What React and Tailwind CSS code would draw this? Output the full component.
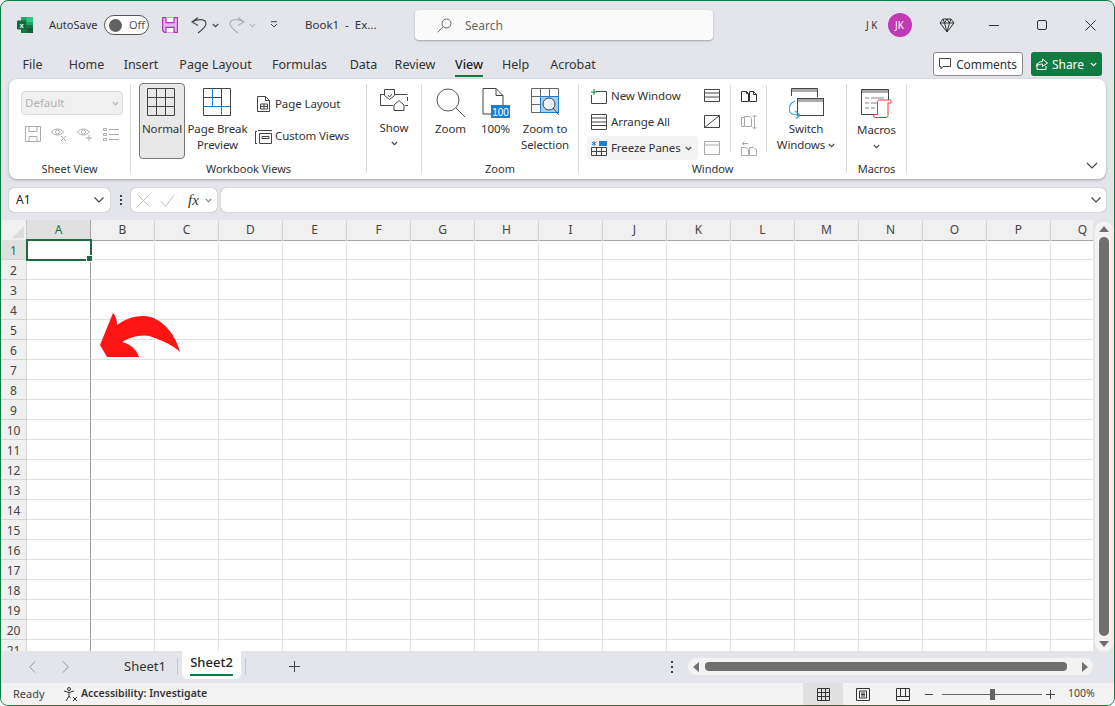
import React from "react";

const columns = ["A", "B", "C", "D", "E", "F", "G", "H", "I", "J", "K", "L", "M", "N", "O", "P", "Q"];
const rows = Array.from({ length: 21 }, (_, i) => i + 1);

const tabs = [
  { name: "File", w: "w-[41px]" },
  { name: "Home", w: "w-[67px]" },
  { name: "Insert", w: "w-[42px]" },
  { name: "Page Layout", w: "w-[107px]" },
  { name: "Formulas", w: "w-[61px]" },
  { name: "Data", w: "w-[67px]" },
  { name: "Review", w: "w-[36px]" },
  { name: "View", w: "w-[72px]", active: true },
  { name: "Help", w: "w-[21px]" },
  { name: "Acrobat", w: "w-[94px]" },
];

function Chevron({ color = "#444", className = "" }) {
  return (
    <svg width="7" height="5" viewBox="0 0 7 5" className={`shrink-0 ${className}`} fill="none" stroke={color} strokeWidth="1.1">
      <path d="M.8 1l2.700 2.700L6.200 1" />
    </svg>
  );
}

function Glyph({ w = 16, h = 16, color = "#444", sw = 1, children, className = "" }) {
  return (
    <svg width={w} height={h} viewBox={`0 0 ${w} ${h}`} className={`shrink-0 ${className}`} fill="none" stroke={color} strokeWidth={sw}>
      {children}
    </svg>
  );
}

function Group({ label, width, children }) {
  return (
    <div className={`${width} h-[89px] mt-[5px] border-r border-[#d9d9d9] flex flex-col shrink-0`}>
      <div className="h-[77px] flex shrink-0">{children}</div>
      <div className="h-[16px] leading-[16px] text-[11px] text-center text-[#333] shrink-0">{label}</div>
    </div>
  );
}

function BigBtn({ width, icon, lines }) {
  return (
    <div className={`${width} flex flex-col items-center shrink-0`}>
      <div className="h-[37px] pt-[4px]">{icon}</div>
      {lines.map((l) => (
        <div key={l} className="leading-[16px] text-[11.5px] tracking-[-0.1px] text-[#333] whitespace-nowrap">
          {l}
        </div>
      ))}
    </div>
  );
}

function SmallRow({ icon, label, chevron, active }) {
  return (
    <div className={`h-[24px] w-[111px] pl-[4px] flex items-center gap-[4px] rounded-[4px] text-[11.5px] tracking-[-0.1px] text-[#333] whitespace-nowrap ${active ? "bg-[#f3f3f3]" : ""}`}>
      {icon}
      {label}
      {chevron && <Chevron />}
    </div>
  );
}

function TitleBar() {
  return (
    <div className="h-[44px] pt-[4px] flex items-center shrink-0 text-[#333]">
      <svg width="16" height="16" viewBox="0 0 16 16" className="ml-[16px] shrink-0">
        <rect x="4" y="0" width="12" height="16" rx="1" fill="#21a366" />
        <rect x="10" y="0" width="6" height="5" fill="#33c481" />
        <rect x="4" y="8" width="12" height="8" fill="#107c41" />
        <rect x="10" y="11" width="6" height="5" fill="#185c37" />
        <rect x="0" y="3.5" width="9" height="9" rx="1" fill="#0e6b3a" />
        <text x="4.5" y="10.8" fontSize="7.5" fontWeight="700" fill="#fff" stroke="none" textAnchor="middle" fontFamily="Liberation Sans, sans-serif">x</text>
      </svg>
      <div className="ml-[16px] w-[48px] text-[11px] whitespace-nowrap">AutoSave</div>
      <div className="ml-[7px] w-[45px] h-[20px] rounded-full border border-[#555] bg-white flex items-center pl-[4px] text-[11px] text-[#555]">
        <div className="w-[13px] h-[13px] rounded-full bg-[#616161]" />
        <span className="ml-[7px]">Off</span>
      </div>
      <Glyph w={16} h={16} color="#a83ab5" sw={1.2} className="ml-[13px]">
        <path d="M.6.6h14.8v14.8H2.5L.6 13.5z" fill="#e3b5e8" />
        <path d="M4 .6v5h8v-5M4 15.4v-5h8v5" fill="#fff" />
      </Glyph>
      <Glyph w={16} h={17} className="ml-[13px]" sw={1.1}>
        <path d="M7 .5L1 5l6 3.500M1 5C6 2 15 1 15 7c0 3-4 6-8 9" />
      </Glyph>
      <Chevron className="ml-[5px]" />
      <Glyph w={16} h={17} color="#aeaeae" className="ml-[10px]" sw={1.1}>
        <path d="M9 .5L15 5 9 8.500M15 5C10 2 1 1 1 7c0 3 4 6 8 9" />
      </Glyph>
      <Chevron color="#bbb" className="ml-[4px]" />
      <Glyph w={8} h={8} className="ml-[14px]">
        <path d="M1 .7h6M1 3l3 3 3-3" />
      </Glyph>
      <div className="ml-[27px] w-[110px] text-[11.5px] whitespace-pre">Book1  -  Ex...</div>
      <div className="w-[298px] h-[30px] rounded-[4px] bg-[#fafafa] shadow-[0_1px_2px_rgba(0,0,0,0.3)] flex items-center pl-[22px] text-[12px] text-[#666]">
        <Glyph w={15} h={15} color="#666">
          <circle cx="9.5" cy="5.5" r="4.5" />
          <path d="M6.3 8.7L.7 14.3" />
        </Glyph>
        <span className="ml-[13px] pt-px">Search</span>
      </div>
      <div className="ml-[153px] text-[10px] whitespace-pre">J K</div>
      <div className="ml-[10px] w-[24px] h-[24px] rounded-full bg-[#c239b3] text-white text-[10px] flex items-center justify-center">JK</div>
      <Glyph w={16} h={15} className="ml-[27px]" color="#333">
        <path d="M4 1h8l3 4-7 9-7-9zM1 5h14M5.500 5L8 14l2.500-9M4 1l1.500 4L8 1l2.500 4L12 1" />
      </Glyph>
      <div className="ml-[34px] w-[10px] h-px bg-[#333]" />
      <div className="ml-[38px] w-[10px] h-[10px] border border-[#333] rounded-[2px]" />
      <Glyph w={11} h={11} className="ml-[38px]" color="#333">
        <path d="M.5.5l10 10M10.500.5l-10 10" />
      </Glyph>
    </div>
  );
}

function TabRow() {
  return (
    <div className="h-[34px] pt-[4px] pl-[11px] flex items-center shrink-0 text-[12.5px] text-[#333]">
      {tabs.map((t) => (
        <div key={t.name} className={`${t.w} shrink-0 flex justify-center whitespace-nowrap`}>
          <div className={`h-[24px] leading-[25px] relative ${t.active ? "font-medium text-[#222]" : ""}`}>
            {t.name}
            {t.active && <div className="absolute left-0 right-0 bottom-[-1px] h-[2px] bg-[#107c41]" />}
          </div>
        </div>
      ))}
      <div className="ml-[313px] w-[90px] h-[24px] leading-[24px] bg-white border border-[#8a8a8a] rounded-[3px] flex items-center justify-center gap-[5px] text-[12px] tracking-[-0.1px] shrink-0">
        <Glyph w={12} h={12}>
          <path d="M.5.5h11v8H4L2 11V8.500H.5z" />
        </Glyph>
        <span className="pt-px">Comments</span>
      </div>
      <div className="ml-[8px] w-[71px] h-[24px] bg-[#107c41] rounded-[3px] text-white flex items-center justify-center gap-[4px] text-[12px] shrink-0">
        <Glyph w={12} h={12} color="#fff">
          <path d="M1 5.500V11.500H10V8M.500 8c1-3 3-4.500 6-4.500V1l5 4-5 3.500V6C4 6 2 7 .500 8z" />
        </Glyph>
        <span className="pt-px">Share</span>
        <Chevron color="#fff" className="ml-[2px]" />
      </div>
    </div>
  );
}

function SheetViewGroup() {
  return (
    <Group label="Sheet View" width="w-[122px]">
      <div className="pl-[12px] pt-[7px]">
        <div className="w-[102px] h-[24px] rounded-[4px] border border-[#dcdcdc] bg-[#f0f0f0] flex items-center justify-between px-[3px] text-[11.5px] text-[#b0b0b0]">
          Default
          <Chevron color="#b5b5b5" />
        </div>
        <div className="mt-[11px] pl-[4px] flex gap-[10px]">
          <Glyph color="#ababab">
            <path d="M.5.5h15v15H.5zM4 .5v5h8v-5M4 15.500v-5h8v5" />
          </Glyph>
          <Glyph color="#ababab">
            <path d="M.5 6c3-4 9-4 12 0-3 4-9 4-12 0z" />
            <circle cx="6.500" cy="6" r="2" />
            <path d="M10 10l5 5M15 10l-5 5" />
          </Glyph>
          <Glyph color="#ababab">
            <path d="M.5 6c3-4 9-4 12 0-3 4-9 4-12 0z" />
            <circle cx="6.500" cy="6" r="2" />
            <path d="M12 9v6M9 12h6" />
          </Glyph>
          <Glyph color="#ababab">
            <path d="M.5 2.500h3v2h-3zM.5 7.500h3v2h-3zM.5 12.500h3v2h-3zM6 3.500h10M6 8.500h10M6 13.500h10" />
          </Glyph>
        </div>
      </div>
    </Group>
  );
}

function WorkbookViewsGroup() {
  return (
    <Group label="Workbook Views" width="w-[236px]">
      <div className="ml-[8px] w-[46px] h-[76px] -mt-px bg-[#e8e8e8] border border-[#777] rounded-[4px] flex flex-col items-center shrink-0">
        <Glyph w={28} h={28} className="mt-[4px] -translate-x-px">
          <path d="M.5.5h27v27H.5zM9.500.5v27M18.500.5v27M.5 9.500h27M.5 18.500h27" />
        </Glyph>
        <div className="mt-[5px] leading-[16px] text-[11.5px] tracking-[-0.1px] text-[#333]">Normal</div>
      </div>
      <BigBtn
        width="w-[65px]"
        lines={["Page Break", "Preview"]}
        icon={
          <Glyph w={28} h={28} className="-translate-x-px">
            <path d="M.5.5h27v27H.5zM.5 9.500h18M18.500.5v18" />
            <path d="M9.500.5v18M.5 18.500h27M18.500 18.500v9" stroke="#1d7fcb" />
          </Glyph>
        }
      />
      <div className="pl-[5px] pt-[8px] flex flex-col gap-[8px] text-[11.5px] tracking-[-0.1px] text-[#333] whitespace-nowrap">
        <div className="h-[24px] flex items-center gap-[3px]">
          <Glyph w={17} h={16}>
            <path d="M2.500.5h8l4 4v11h-12zM10.500.5v4h4M5.500 8h7v5h-7zM9 8v5M5.500 10.500h7" />
          </Glyph>
          Page Layout
        </div>
        <div className="h-[24px] flex items-center gap-[3px]">
          <Glyph w={17} h={16}>
            <path d="M3 2.500h14M.5 3.500v12M0 3.500h2M0 15.500h2M4.500 5.500h12v10h-12zM7 8.500h7v2H7z" />
          </Glyph>
          Custom Views
        </div>
      </div>
    </Group>
  );
}

function ShowGroup() {
  return (
    <Group label="" width="w-[55px]">
      <div className="w-full flex flex-col items-center pt-[5px]">
        <Glyph w={29} h={23}>
          <path d="M.5 5v11.500H13M.5 5.500H4M4.500.5h10v6l-5 4-5-4zM14.500 5.500h13M27.500 8v4M25 16.500h3M8 6l1.500 2L12 5" />
          <path d="M14 16l5-4.500 5 4.500v5.500H14z" />
        </Glyph>
        <div className="mt-[8px] leading-[16px] text-[11.5px] tracking-[-0.1px] text-[#333]">Show</div>
        <Chevron className="mt-[5px]" />
      </div>
    </Group>
  );
}

function ZoomGroup() {
  return (
    <Group label="Zoom" width="w-[157px]">
      <BigBtn
        width="w-[57px]"
        lines={["Zoom"]}
        icon={
          <Glyph w={30} h={30} color="#555">
            <circle cx="12" cy="12" r="11" />
            <path d="M20 20l9 9" />
          </Glyph>
        }
      />
      <BigBtn
        width="w-[33px]"
        lines={["100%"]}
        icon={
          <svg width="28" height="30" viewBox="0 0 28 30" className="shrink-0" fill="none" stroke="#444">
            <path d="M1 26V.5h13l7 7V18M14 .5v7h7M1 26h8" />
            <rect x="9" y="17" width="19" height="13" fill="#1d7fcb" stroke="none" />
            <text x="18.500" y="27.500" fontSize="10" fill="#fff" stroke="none" textAnchor="middle" fontFamily="Liberation Sans, sans-serif">100</text>
          </svg>
        }
      />
      <BigBtn
        width="w-[66px]"
        lines={["Zoom to", "Selection"]}
        icon={
          <svg width="29" height="29" viewBox="0 0 29 29" className="shrink-0" fill="none" stroke="#666">
            <path d="M.5 8.500h27V.5H.5v24h9M.5 16.500h9M9.500 .5v24M18.500 .5v8" />
            <rect x="9.500" y="8.500" width="18" height="16" fill="#a9cdec" stroke="#1d7fcb" />
            <circle cx="18" cy="16" r="6" fill="#e9f2fa" stroke="#444" />
            <path d="M22 20l6 7" stroke="#444" />
          </svg>
        }
      />
    </Group>
  );
}

function WindowGroup() {
  return (
    <Group label="Window" width="w-[268px]">
      <div className="pl-[8px] flex flex-col gap-[2px] shrink-0">
        <SmallRow
          label="New Window"
          icon={
            <Glyph w={16} h={15}>
              <path d="M5 2.500h10.500v12H.5V6" />
              <path d="M3 0v6M0 3h6" stroke="#107c41" />
            </Glyph>
          }
        />
        <SmallRow
          label="Arrange All"
          icon={
            <Glyph w={16} h={16}>
              <path d="M.5.5h15v15H.5zM.5 4h15M.5 8h15M.5 11.500h15" />
            </Glyph>
          }
        />
        <SmallRow
          active
          chevron
          label="Freeze Panes"
          icon={
            <svg width="16" height="16" viewBox="0 0 16 16" className="shrink-0" fill="none" stroke="#444">
              <rect x="8" y="1" width="8" height="5" fill="#1d7fcb" stroke="none" />
              <path d="M.5 7.500h15v8H.5zM5.500 7.500v8M10.500 7.500v8M.5 11.500h15" />
              <path d="M3 1v5M.8 2.200l4.400 2.600M5.200 2.200L.8 4.800" stroke="#1d7fcb" />
            </svg>
          }
        />
      </div>
      <div className="ml-[6px] pt-[4px] flex flex-col gap-[10px] shrink-0">
        <Glyph>
          <path d="M.5 1.500h15v12H.5zM.5 5h15M.5 9h15" />
        </Glyph>
        <Glyph>
          <path d="M.5 1.500h15v12H.5zM.5 13.500l15-12" />
        </Glyph>
        <Glyph color="#aaa">
          <path d="M.5 1.500h15v13H.5zM.5 5h15" />
        </Glyph>
      </div>
      <div className="ml-[10px] mt-[1px] w-px h-[67px] bg-[#d9d9d9] shrink-0" />
      <div className="ml-[10px] pt-[4px] flex flex-col gap-[10px] shrink-0">
        <Glyph color="#333">
          <path d="M.5 3.500h5l2 2v8h-7zM5.500 3.500v2h2M8.500 3.500h4l3 3v7h-7zM12.500 3.500v3h3" />
        </Glyph>
        <Glyph color="#aaa">
          <path d="M3 3.500H.5v9H3M3.500 2.500h5l2 2v8h-7zM13.500 1v14M11.500 3l2-2 2 2M11.500 13l2 2 2-2" />
        </Glyph>
        <Glyph color="#aaa">
          <path d="M.5 7.500h4l3 2v6h-7zM8.500 7.500h4l3 2v6h-7zM1.500 3.500H7M1.500 3.500l2-2M1.500 3.500l2 2" />
        </Glyph>
      </div>
      <div className="ml-[9px] mt-[1px] w-px h-[67px] bg-[#d9d9d9] shrink-0" />
      <div className="w-[78px] flex flex-col items-center shrink-0">
        <div className="h-[37px] pt-[4px]">
          <svg width="35" height="31" viewBox="0 0 35 31" fill="none" stroke="#444">
            <path d="M2.500 8V.5h26v9" />
            <rect x="3" y="1" width="25" height="3" fill="#aaa" stroke="none" />
            <rect x="8.500" y="10.500" width="26" height="17" fill="#fff" />
            <rect x="9" y="11" width="25" height="3" fill="#aaa" stroke="none" />
            <path d="M6 13C1 15-1 20 1 24c1.500 2.500 5 3 9 3M6 23l5 4-4 4" stroke="#3b9ce0" strokeWidth="1.100" />
          </svg>
        </div>
        <div className="leading-[16px] text-[11.5px] tracking-[-0.1px] text-[#333]">Switch</div>
        <div className="leading-[16px] text-[11.5px] tracking-[-0.1px] text-[#333] flex items-center gap-[3px]">
          Windows
          <Chevron />
        </div>
      </div>
    </Group>
  );
}

function MacrosGroup() {
  return (
    <Group label="Macros" width="w-[60px]">
      <div className="w-full flex flex-col items-center pt-[5px]">
        <svg width="31" height="29" viewBox="0 0 31 29" fill="none" stroke="#444">
          <path d="M14 25.500H.5V.5h27v13" />
          <rect x="1" y="1" width="26" height="3" fill="#aaa" stroke="none" />
          <path d="M4 9h4M10 9h13M4 14h4M10 14h6M4 19h4M10 19h4" stroke="#888" />
          <path d="M16 28.500h9c1 0 2-1 2-2V14h3c.5-1 0-3-1-3H18c-1 0-1.500 1-1.500 2v12.500h-3c-1 0-1 3 0 3z" fill="#fff" stroke="#ee3333" />
        </svg>
        <div className="mt-[4px] leading-[16px] text-[11.5px] tracking-[-0.1px] text-[#333]">Macros</div>
        <Chevron className="mt-[6px]" />
      </div>
    </Group>
  );
}

function Ribbon() {
  return (
    <div className="mx-[8px] h-[100px] bg-white rounded-[8px] shadow-[0_1px_3px_rgba(0,0,0,0.3)] flex shrink-0">
      <SheetViewGroup />
      <WorkbookViewsGroup />
      <ShowGroup />
      <ZoomGroup />
      <WindowGroup />
      <MacrosGroup />
      <Glyph w={12} h={7} className="ml-auto mr-[8px] mt-[83px]" sw={1.1}>
        <path d="M1 1l5 5 5-5" />
      </Glyph>
    </div>
  );
}

function FormulaBar() {
  return (
    <div className="h-[41px] pt-[9px] px-[8px] flex shrink-0">
      <div className="w-[101px] h-[24px] bg-white rounded-[5px] shadow-[0_0_1px_rgba(0,0,0,0.5)] flex items-center justify-between pl-[7px] pr-[6px] text-[12px] text-[#222]">
        A1
        <Glyph w={10} h={6} sw={1.100}>
          <path d="M.5.5L5 5 9.500.5" />
        </Glyph>
      </div>
      <div className="w-[21px] h-[24px] flex flex-col items-center justify-center gap-[2px]">
        <div className="w-[2px] h-[2px] bg-[#444]" />
        <div className="w-[2px] h-[2px] bg-[#444]" />
        <div className="w-[2px] h-[2px] bg-[#444]" />
      </div>
      <div className="w-[86px] h-[24px] bg-white rounded-[5px] shadow-[0_0_1px_rgba(0,0,0,0.5)] flex items-center pl-[6px] shrink-0">
        <Glyph w={13} h={13} color="#bdbdbd">
          <path d="M.5.5l12 12M12.500.5l-12 12" />
        </Glyph>
        <Glyph w={15} h={13} color="#bdbdbd" className="ml-[10px]">
          <path d="M.5 7l5 5.500L14.500.5" />
        </Glyph>
        <span className="ml-[13px] font-['Liberation_Serif',serif] italic text-[15px] text-[#333] leading-none">fx</span>
        <Chevron color="#888" className="ml-[6px]" />
      </div>
      <div className="ml-[4px] flex-1 h-[24px] bg-white rounded-[5px] shadow-[0_0_1px_rgba(0,0,0,0.5)] flex items-center justify-end pr-[5px]">
        <Glyph w={10} h={6} sw={1.100}>
          <path d="M.5.5L5 5 9.500.5" />
        </Glyph>
      </div>
    </div>
  );
}

function Sheet() {
  return (
    <div className="flex-1 min-h-0 flex">
      <div className="relative flex-1 min-w-0 overflow-hidden bg-white">
        <div className="flex h-[20px] w-max bg-[#f0f0f0] border-b border-[#a5a5a5] box-content -mb-px">
          <div className="w-[26px] shrink-0 border-r border-[#c8c8c8] flex items-end justify-end pr-[2px] pb-[2px]">
            <div className="w-0 h-0 border-l-[12px] border-l-transparent border-b-[12px] border-b-[#dcdcdc]" />
          </div>
          {columns.map((c) => (
            <div
              key={c}
              className={`w-[64px] shrink-0 border-r flex items-center justify-center text-[12px] ${c === "A" ? "bg-[#e0e0e0] border-[#a5a5a5] text-[#217346]" : "border-[#d4d4d4] text-[#444]"}`}
            >
              {c}
            </div>
          ))}
        </div>
        {rows.map((r) => (
          <div key={r} className="flex h-[20px] w-max">
            <div
              className={`w-[26px] shrink-0 border-r border-b pt-[2px] flex items-center justify-center text-[12px] ${r === 1 ? "bg-[#e0e0e0] border-[#d4d4d4] text-[#217346]" : "bg-[#f0f0f0] border-[#d4d4d4] text-[#444]"}`}
            >
              {r}
            </div>
            {columns.map((c) => (
              <div key={c} className={`w-[64px] shrink-0 border-b border-[#e1e1e1] relative ${c === "A" ? "border-r border-r-[#9c9c9c]" : "border-r"}`}>
                {c === "A" && r === 1 && (
                  <div className="absolute left-[-1px] top-[-1px] w-[66px] h-[22px] border-2 border-[#1d6b41] z-10">
                    <div className="absolute right-[-3px] bottom-[-3px] w-[5px] h-[5px] bg-[#1d6b41] border border-white box-content" />
                  </div>
                )}
              </div>
            ))}
          </div>
        ))}
        <svg width="82" height="46" viewBox="100 313 82 46" className="absolute left-[99px] top-[93px] z-10">
          <path
            d="M113 313 L100 345 L107 357 L139 357 C137 351 133 345 122 342 C132 336 143 334 152 337 C164 341 174 346 180 352 C177 338 163 316 143 316 C132 316 124 320 117 325 C117 321 116 316 113 313 Z"
            fill="#ff1414"
          />
        </svg>
      </div>
      <div className="w-[21px] shrink-0 pl-[2px] pr-[1px] pt-[2px]">
        <div className="h-full rounded-[8px] bg-[#f3f3f3] flex flex-col items-center">
          <div className="w-0 h-0 mt-[4px] border-x-[5px] border-x-transparent border-b-[6px] border-b-[#707070]" />
          <div className="flex-1 w-[10px] my-[5px] rounded-[5px] bg-[#707070]" />
          <div className="w-0 h-0 mb-[4px] border-x-[5px] border-x-transparent border-t-[6px] border-t-[#707070]" />
        </div>
      </div>
    </div>
  );
}

function SheetTabs() {
  return (
    <div className="h-[32px] flex shrink-0 text-[#333]">
      <Glyph w={7} h={12} color="#999" className="ml-[28px] mt-[10px]">
        <path d="M6 .5L.8 6 6 11.500" />
      </Glyph>
      <Glyph w={7} h={12} color="#999" className="ml-[26px] mt-[10px]">
        <path d="M1 .5L6.200 6 1 11.500" />
      </Glyph>
      <div className="ml-[55px] w-[44px] pt-[6px] text-[13px] whitespace-nowrap">Sheet1</div>
      <div className="ml-[9px] mt-[7px] w-px h-[17px] bg-[#c4c4c4]" />
      <div className="ml-[4px] w-[59px] h-[28px] bg-white rounded-b-[6px] flex justify-center">
        <div className="h-[25px] pt-[1px] border-b-2 border-[#107c41] text-[13px] font-medium text-[#222] leading-[20px]">Sheet2</div>
      </div>
      <div className="ml-[4px] mt-[7px] w-px h-[17px] bg-[#c4c4c4]" />
      <Glyph w={11} h={11} className="ml-[43px] mt-[10px]" color="#444">
        <path d="M5.500 0v11M0 5.500h11" />
      </Glyph>
      <div className="ml-[371px] mt-[10px] h-[12px] flex flex-col items-center justify-between">
        <div className="w-[2px] h-[2px] bg-[#444]" />
        <div className="w-[2px] h-[2px] bg-[#444]" />
        <div className="w-[2px] h-[2px] bg-[#444]" />
      </div>
      <div className="ml-[15px] mt-[7px] w-[405px] h-[17px] rounded-[8px] bg-[#f3f3f3] flex items-center pl-[5px] pr-[5px]">
        <div className="w-0 h-0 border-y-[5px] border-y-transparent border-r-[6px] border-r-[#707070]" />
        <div className="ml-[6px] w-[362px] h-[9px] rounded-[4px] bg-[#707070]" />
        <div className="ml-auto w-0 h-0 border-y-[5px] border-y-transparent border-l-[6px] border-l-[#707070]" />
      </div>
    </div>
  );
}

function StatusBar() {
  return (
    <div className="h-[22px] bg-[#f3f3f3] rounded-b-[6px] flex items-center shrink-0 text-[11px] text-[#444]">
      <div className="ml-[12px] w-[50px]">Ready</div>
      <Glyph w={15} h={15} color="#333">
        <circle cx="6" cy="2" r="1.500" />
        <path d="M1 4l5 1.500L11 4M6 5.500V9M6 9l-3 5M6 9l1.500 2M10 10l4 4M14 10l-4 4" />
      </Glyph>
      <div className="ml-[3px] text-[10.5px] font-semibold text-[#333] whitespace-nowrap w-[126px]">Accessibility: Investigate</div>
      <div className="ml-[596px] w-[40px] h-full bg-[#e0e0e0] flex items-center justify-center">
        <Glyph w={13} h={13} color="#333">
          <path d="M.5.5h12v12H.5zM4.500.5v12M8.500.5v12M.5 4.500h12M.5 8.500h12" />
        </Glyph>
      </div>
      <div className="w-[40px] flex justify-center">
        <Glyph w={14} h={13} color="#333">
          <path d="M.5.5h13v12H.5zM3.500 3h7v7h-7zM5 5h4M5 6.500h4M5 8h4" />
        </Glyph>
      </div>
      <div className="w-[40px] flex justify-center">
        <Glyph w={14} h={13} color="#333">
          <path d="M.5.5h13v12H.5zM.5 8.500h13M4.500.5v8M9.500.5v8" />
        </Glyph>
      </div>
      <div className="ml-[2px] w-[8px] h-px bg-[#444]" />
      <div className="ml-[9px] w-[100px] h-px bg-[#666] relative">
        <div className="absolute left-[48px] top-[-5px] w-[5px] h-[11px] bg-[#666]" />
      </div>
      <Glyph w={9} h={9} className="ml-[4px]" color="#444">
        <path d="M4.500 0v9M0 4.500h9" />
      </Glyph>
      <div className="ml-[13px] text-[10.5px]">100%</div>
    </div>
  );
}

export default function App() {
  return (
    <div className="w-screen h-screen overflow-hidden bg-white">
      <div className="w-full h-full flex flex-col bg-[#e3e5ea] border border-[#107c41] rounded-[8px] overflow-hidden font-['Noto_Sans','Open_Sans',sans-serif]">
        <TitleBar />
        <TabRow />
        <Ribbon />
        <FormulaBar />
        <Sheet />
        <SheetTabs />
        <StatusBar />
      </div>
    </div>
  );
}
